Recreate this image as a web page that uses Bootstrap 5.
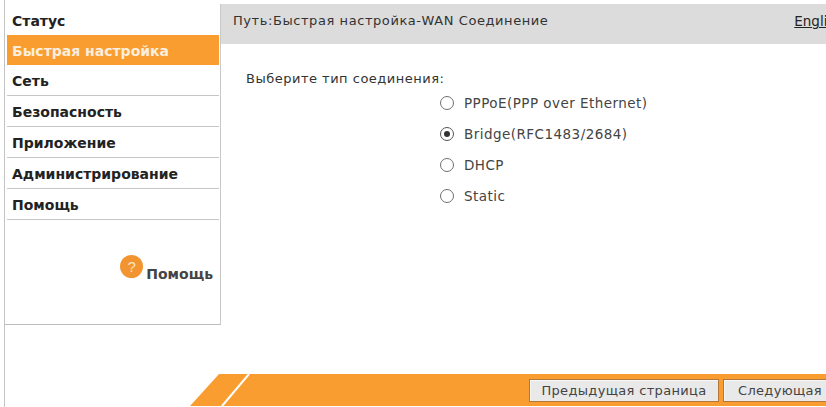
<!DOCTYPE html>
<html lang="ru">
<head>
<meta charset="utf-8">
<title>Быстрая настройка</title>
<link rel="stylesheet" href="https://cdn.jsdelivr.net/npm/bootstrap@5.3.0/dist/css/bootstrap.min.css">
<style>
html,body{margin:0;height:407px;overflow:hidden;background:#fff}
body{font-family:"DejaVu Sans",sans-serif;color:#333;font-size:13px}
.frame{width:826px;height:407px;margin-left:4px;padding-top:4px;border-left:1px solid #c4c4c4;overflow:hidden}
.upper{height:370px}
.side{width:216px;height:321px;border-right:1px solid #c9c9c9;border-bottom:1px solid #bdbdbd;flex:none}
.menu-row{height:31px;line-height:32px;padding-left:5px;margin-left:2px;margin-right:1px;font-weight:700;font-size:14px;color:#222;border-bottom:1px solid #c6c6c6}
.menu-row.first{height:31px;border-bottom:0;line-height:35px}
.menu-row.active{background:#f99d31;color:#fbeedd;border-bottom:0;height:30px;line-height:33px}
.help-row{margin-top:35px;padding-right:7px;height:32px}
.help-ball{width:23px;height:23px;border-radius:50%;background:#f29530;color:#fde3c0;font-family:"Liberation Sans",sans-serif;font-size:15px;line-height:23px;text-align:center;margin-right:3px}
.help-text{font-weight:700;font-size:14px;color:#444;margin-top:9px}
.main{width:610px;flex:none}
.head{height:40px;background:#dcdcdc;padding:7px 13px 0 12px;font-size:13px;letter-spacing:.57px;color:#333;white-space:nowrap;overflow:hidden}
.head a{color:#222;font-size:13.5px;letter-spacing:0;position:relative;left:25px}
.prompt{padding:26px 0 0 25px;font-size:13px;letter-spacing:.5px;line-height:17px}
.opts{margin:0 0 0 219px}
.opt{height:31px;font-size:13.5px;line-height:18px;letter-spacing:.46px;color:#444}
.radio-dot{width:14px;height:14px;border:1px solid #707070;border-radius:50%;background:#fff;margin-right:10px;flex:none}
.radio-dot.on{border-color:#555;position:relative}
.radio-dot.on::after{content:"";position:absolute;left:3px;top:3px;width:6px;height:6px;border-radius:50%;background:#333}
.foot{height:33px;margin-left:185px;width:640px}
.foot svg{display:block;position:absolute;left:0;top:0}
.foot-wrap{position:relative;height:33px}
.foot-btns{padding:5px 0 0 340px;white-space:nowrap;margin-left:-1px}
.foot-btn{height:23px;padding:0;border:1px solid #b4773a;background:#e9e9e9;color:#444;font-size:13px;line-height:20px;border-radius:0;margin-right:4px;letter-spacing:.33px;box-shadow:inset 1px 1px 0 #f7f7f7}
.btn-prev{width:190px}
.btn-next{width:120px;text-align:left;padding-left:14px}
</style>
</head>
<body>
<div class="frame">
  <div class="upper d-flex">
    <div class="side">
      <div class="menu-row first">Статус</div>
      <div class="menu-row active">Быстрая настройка</div>
      <div class="menu-row">Сеть</div>
      <div class="menu-row">Безопасность</div>
      <div class="menu-row">Приложение</div>
      <div class="menu-row">Администрирование</div>
      <div class="menu-row">Помощь</div>
      <div class="help-row d-flex justify-content-end align-items-start">
        <div class="help-ball">?</div>
        <div class="help-text">Помощь</div>
      </div>
    </div>
    <div class="main">
      <div class="head d-flex justify-content-between">
        <span>Путь:Быстрая настройка-WAN Соединение</span>
        <a href="#">English</a>
      </div>
      <div class="prompt">Выберите тип соединения:</div>
      <div class="opts">
        <div class="opt d-flex align-items-center"><span class="radio-dot"></span>PPPoE(PPP over Ethernet)</div>
        <div class="opt d-flex align-items-center"><span class="radio-dot on"></span>Bridge(RFC1483/2684)</div>
        <div class="opt d-flex align-items-center"><span class="radio-dot"></span>DHCP</div>
        <div class="opt d-flex align-items-center"><span class="radio-dot"></span>Static</div>
      </div>
    </div>
  </div>
  <div class="foot">
    <div class="foot-wrap">
      <svg width="640" height="33" viewBox="0 0 640 33" aria-hidden="true">
        <polygon points="0,32 29,0 640,0 640,32" fill="#f99d31"/>
        <line x1="32" y1="32" x2="59" y2="0" stroke="#fff" stroke-width="2"/>
      </svg>
      <div class="foot-btns position-relative">
        <button class="foot-btn btn-prev" type="button">Предыдущая страница</button><button class="foot-btn btn-next" type="button">Следующая страница</button>
      </div>
    </div>
  </div>
</div>
<script src="https://cdn.jsdelivr.net/npm/bootstrap@5.3.0/dist/js/bootstrap.bundle.min.js"></script>
</body>
</html>
